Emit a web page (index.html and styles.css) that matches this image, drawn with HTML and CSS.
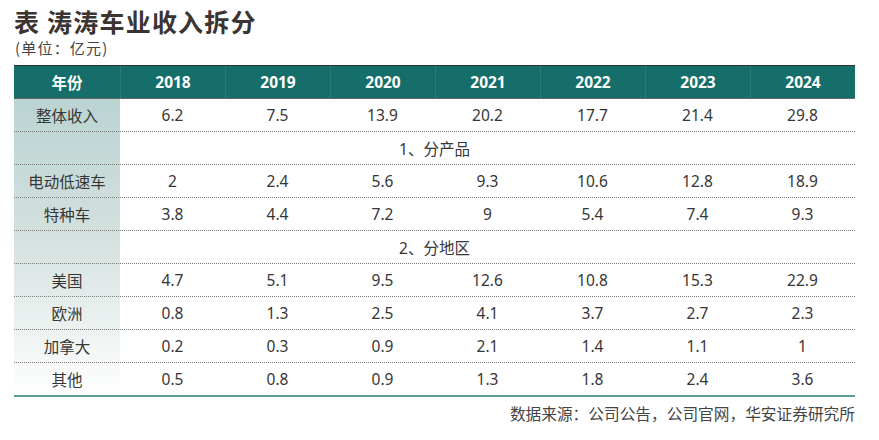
FILE: index.html
```html
<!DOCTYPE html>
<html lang="zh">
<head>
<meta charset="utf-8">
<title>涛涛车业收入拆分</title>
<link rel="stylesheet" href="styles.css">
</head>
<body>
<div class="page">
  <h1 class="title">表 涛涛车业收入拆分</h1>
  <div class="unit">(单位：亿元)</div>
  <div class="table">
    <div class="row head">
      <div class="cell">年份</div><div class="cell">2018</div><div class="cell">2019</div><div class="cell">2020</div><div class="cell">2021</div><div class="cell">2022</div><div class="cell">2023</div><div class="cell">2024</div>
    </div>
    <div class="body">
      <div class="row">
        <div class="cell">整体收入</div><div class="cell">6.2</div><div class="cell">7.5</div><div class="cell">13.9</div><div class="cell">20.2</div><div class="cell">17.7</div><div class="cell">21.4</div><div class="cell">29.8</div>
      </div>
      <div class="row section"><div class="cell">1、分产品</div></div>
      <div class="row">
        <div class="cell">电动低速车</div><div class="cell">2</div><div class="cell">2.4</div><div class="cell">5.6</div><div class="cell">9.3</div><div class="cell">10.6</div><div class="cell">12.8</div><div class="cell">18.9</div>
      </div>
      <div class="row">
        <div class="cell">特种车</div><div class="cell">3.8</div><div class="cell">4.4</div><div class="cell">7.2</div><div class="cell">9</div><div class="cell">5.4</div><div class="cell">7.4</div><div class="cell">9.3</div>
      </div>
      <div class="row section"><div class="cell">2、分地区</div></div>
      <div class="row">
        <div class="cell">美国</div><div class="cell">4.7</div><div class="cell">5.1</div><div class="cell">9.5</div><div class="cell">12.6</div><div class="cell">10.8</div><div class="cell">15.3</div><div class="cell">22.9</div>
      </div>
      <div class="row">
        <div class="cell">欧洲</div><div class="cell">0.8</div><div class="cell">1.3</div><div class="cell">2.5</div><div class="cell">4.1</div><div class="cell">3.7</div><div class="cell">2.7</div><div class="cell">2.3</div>
      </div>
      <div class="row">
        <div class="cell">加拿大</div><div class="cell">0.2</div><div class="cell">0.3</div><div class="cell">0.9</div><div class="cell">2.1</div><div class="cell">1.4</div><div class="cell">1.1</div><div class="cell">1</div>
      </div>
      <div class="row last">
        <div class="cell">其他</div><div class="cell">0.5</div><div class="cell">0.8</div><div class="cell">0.9</div><div class="cell">1.3</div><div class="cell">1.8</div><div class="cell">2.4</div><div class="cell">3.6</div>
      </div>
    </div>
  </div>
  <div class="source">数据来源：公司公告，公司官网，华安证券研究所</div>
</div>
</body>
</html>
```

FILE: styles.css
```css
html, body {
  margin: 0;
  padding: 0;
  background: #ffffff;
}

body {
  font-family: "Noto Sans", "Noto Sans CJK SC", sans-serif;
  color: #363636;
}

.page {
  width: 841px;
  padding-left: 14px;
}

.title {
  margin: 6px 0 0 0;
  font-family: "Noto Sans CJK SC", sans-serif;
  font-size: 25px;
  line-height: 31px;
  font-weight: 700;
  color: #3b3431;
  letter-spacing: 1.2px;
}

.unit {
  margin-top: 1px;
  font-family: "Noto Sans CJK SC", sans-serif;
  font-size: 15px;
  line-height: 20px;
  color: #444;
  padding-left: 1px;
  letter-spacing: 1.2px;
}

.table {
  margin-top: 7px;
  border-top: 1px solid #333;
}

.row {
  display: grid;
  grid-template-columns: 106px repeat(7, 105px);
  height: 33px;
  box-sizing: border-box;
  border-bottom: 1px dotted #7a7a7a;
}

.cell {
  display: flex;
  align-items: center;
  justify-content: center;
  font-size: 15.5px;
  white-space: nowrap;
}

.head {
  background: #156e69;
  color: #ffffff;
  font-weight: 700;
  height: 33px;
}

.head .cell {
  border-left: 1px solid #2b7c77;
}

.head .cell:first-child {
  border-left: none;
}

.body {
  background: linear-gradient(#bad4d2, #d3e0de 45%, #ffffff) no-repeat;
  background-size: 106px 100%;
}

.section {
  grid-template-columns: 1fr;
}

.row.last {
  border-bottom: 2px solid #5c9d97;
  height: 34px;
}

.source {
  margin-top: 6px;
  text-align: right;
  font-family: "Noto Sans CJK SC", sans-serif;
  font-size: 15.7px;
  line-height: 22px;
  color: #444;
}
```
